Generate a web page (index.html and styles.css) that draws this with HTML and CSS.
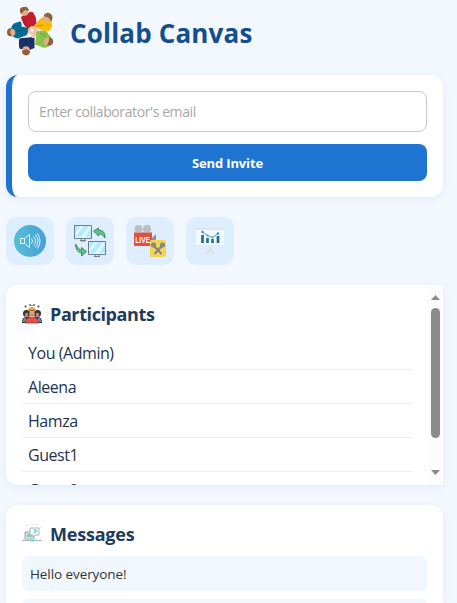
FILE: index.html
```html
<!DOCTYPE html>
<html lang="en">
<head>
<meta charset="utf-8">
<title>Collab Canvas</title>
<link rel="stylesheet" href="styles.css">
</head>
<body>
<header class="brand">
  <svg class="logo" viewBox="0 0 48 50" width="48" height="50">
    <path fill="#c41e32" d="M14 12q0-2 4-3l5-3q3-1 4 2l2 4 .5 7-8.500 4-4-4z"/>
    <path fill="#fdbb08" d="m26 21 7-8q3-3 6-1l5 3q2 2 0 8-2 3-6 2l-6-2z"/>
    <path fill="#8ac44a" d="m28 25 8-.5q4 0 5 3l5 6q1 4-3 6-4 3-7 2l-8-3 1-7z"/>
    <path fill="#1d2f65" d="M12 34q0-2 3-2l12.500-1v11l-5 2-9-1q-2 0-1.500-9z"/>
    <path fill="#066b92" d="M4 23q1-5 4-6l5-1.500q2 0 1.500 5l7.500 1.500-2 7-9 3.500q-5-1-7-4z"/>
    <path fill="#f0c6aa" d="m21 23 3-3 5 1 2 3-3 4v4h-3l-1-4-3-1z"/><circle cx="25" cy="24.500" r="1.300" fill="#fff"/>
    <path d="m16 13 4 7m-11 6 6-2m3 9 1 5m14-11 6 3m-9-10 6-1" fill="none" stroke="#17202d" stroke-opacity=".3"/>
    <g fill="#deb08b"><circle cx="17.500" cy="6" r="3.800"/><circle cx="39.500" cy="12.500" r="3.800"/><circle cx="40.500" cy="35.500" r="3.800"/><circle cx="19" cy="44" r="3.800"/><circle cx="4.500" cy="26.500" r="3.800"/></g>
    <g fill="#925f38"><path d="M13 6q-1-5 4-5 4-1 5 4l-4-1-4 4z"/><path d="M37 9q3-4 7-1 3 3 0 8l-2-4-5-2z"/><path d="M42 31q5 2 4 6-2 4-6 2l2-4z"/><path d="M15 45l4-2 4 2q0 4-4 4.500-4-.5-4-4.500z"/><path d="M5 22q-5 0-5 4 0 5 5 4l-2-4z"/></g>
  </svg>
  <h1>Collab Canvas</h1>
</header>
<main>
  <form class="card invite">
    <input type="email" placeholder="Enter collaborator's email">
    <button type="button">Send Invite</button>
  </form>
  <nav class="tools">
    <a class="tool"><svg viewBox="0 0 32 32" width="32" height="32">
      <defs><linearGradient id="sound"><stop stop-color="#58bed4"/><stop offset="1" stop-color="#45a0db"/></linearGradient></defs>
      <circle cx="16" cy="16" r="16" fill="url(#sound)"/>
      <path fill="none" stroke="#e5f7fc" d="M6.500 13.500h4v5h-4zM10.500 13.500l5-4v13l-5-4M17.500 13.500q2 2.500 0 5M19.500 11.500q4 4.500 0 9M21.500 9.500q5 6.500 0 13M23.500 8.500q5 7.500 0 15"/>
    </svg></a>
    <a class="tool"><svg viewBox="0 0 32 32" width="32" height="32">
      <g id="monitor"><path d="M.5.5h17v13H.5z" fill="#b5eafc" stroke="#6d7c87"/><path d="m7 12 8-11h2v2l-6 9zM1 8l6-7h3l-8 10z" fill="#e2f8ff"/><path d="M1 12h16v2H1z" fill="#f5f8fa"/><path d="M.5 13.500h17M7 14v2h4v-2M6 15.500h6" fill="none" stroke="#707c86"/></g>
      <use href="#monitor" x="14" y="16"/>
      <g fill="#58c782" stroke="#397553" stroke-width=".8"><path d="m19.500 6 5-3v2q7 0 6.500 8-3-5-6.500-4v2z"/><path d="M1.500 19q0 8 6 9v3l5-4.500-5-4v3q-3-1-6-6.500z"/></g>
    </svg></a>
    <a class="tool"><svg viewBox="0 0 32 32" width="32" height="32">
      <g fill="#bdbdbd"><circle cx="4.500" cy="4" r="4"/><circle cx="13" cy="4" r="4"/></g><path d="M0 7h18v2H0z" fill="#c5a5a3"/><path fill="#87949b" d="m17 14 5-5v10h-5z"/>
      <rect y="8" width="18" height="13" rx="1" fill="#e94b3c"/>
      <text x="1.200" y="18" class="live" textLength="15" lengthAdjust="spacingAndGlyphs">LIVE</text>
      <rect x="16" y="15" width="16" height="17" rx="1" fill="#f5d45e"/>
      <g fill="none" stroke="#7a8584" stroke-width="2"><circle cx="19.500" cy="20" r="1.500"/><circle cx="28.500" cy="20" r="1.500"/><path d="m20.500 21.500 7 7.500M27.500 21.500l-7 7.500"/></g>
    </svg></a>
    <a class="tool"><svg viewBox="0 0 32 32" width="32" height="32">
      <path d="M2 4h28v17H2z" fill="#f0f9fb"/><path d="M2 3h28v2H2z" fill="#e2e6ea"/><path d="M2 20h28v1H2z" fill="#e4ebf0"/>
      <path d="M16 21v5m0-1-4 4m4-4 4 4" fill="none" stroke="#d4dbe1" stroke-width="1.500"/>
      <path d="M8.500 10v8M13.500 13v5M18.500 14v4M24 11v7" stroke="#286f8d" stroke-width="2.700"/>
      <path d="m8.500 7 5 3.500 5 2 5.500-4" fill="none" stroke="#397f9c" stroke-width=".8"/><g fill="#28aabc"><circle cx="8.500" cy="7" r="1.300"/><circle cx="13.500" cy="10.500" r="1"/><circle cx="18.500" cy="12.500" r="1"/><circle cx="24" cy="8.500" r="1.300"/></g>
    </svg></a>
  </nav>
  <section class="card participants">
    <div class="roster">
      <h2><svg viewBox="0 0 20 20" width="20" height="20">
        <g fill="#8c8f92"><path d="M2 2h3v1H2zM3 1h1v3H3zM15 2h3v1h-3zM16 1h1v3h-1zM7 0h2v2H7zM11 0h2v2h-2zM9 1h2v1H9z"/></g>
        <path d="M0 19q0-6 4-6h12q4 0 4 6z" fill="#29303a"/><path d="M1 18q0-4 3-4l2 4z" fill="#63ae77"/><path d="m14 18 2-4q3 0 3 4z" fill="#58a4e5"/>
        <circle cx="4.500" cy="9.500" r="3.500" fill="#303139"/><circle cx="15.500" cy="9.500" r="3.500" fill="#303139"/><path d="M3 9h3v4H3zM14 9h3v4h-3z" fill="#b98472"/>
        <path d="M3 19q0-5 5-6h4q5 1 5 6z" fill="#ec4b4b" stroke="#593138" stroke-width=".7"/><circle cx="10" cy="8.500" r="4" fill="#593c32"/><path d="M7.500 7h5v4L10 14l-2.500-3z" fill="#efb18a"/><path d="M6 7q0-4 4-4t4 4l-4-1z" fill="#ecaa37"/><path d="M8 9h1m2 0h1M9 11h2" stroke="#6d3838" stroke-width=".8"/>
      </svg><span>Participants</span></h2>
      <ul><li>You (Admin)</li><li>Aleena</li><li>Hamza</li><li>Guest1</li><li>Guest2</li></ul>
    </div>
    <div class="scrollbar"><i class="arrow up"></i><i class="thumb"></i><i class="arrow down"></i></div>
  </section>
  <section class="card messages">
    <h2><svg viewBox="0 0 20 20" width="20" height="20">
      <path d="M4 1.500h2m3-1h2m3 0h2m2 3h1" stroke="#d8dddf"/><path d="M3 8h9v7H3z" fill="#d8dfe1" stroke="#9ba8ad"/><path d="M5 10h5v3H5z" fill="#8bc8c1"/><path d="M8 4h9v7h-3l-3 2v-2H8z" fill="#f7fafa" stroke="#aeb8bc"/><path d="M12 6h2v2h-1.500v1" fill="none" stroke="#35cbb3"/><path d="M0 16.500h20" stroke="#a7b5b9"/><path d="M1 15h14" stroke="#d1d9dc"/><path d="M8 16h5l-3 2z" fill="#53d2bd"/>
    </svg><span>Messages</span></h2>
    <div class="message">Hello everyone!</div>
    <div class="message"></div>
  </section>
</main>
</body>
</html>
```
FILE: styles.css
```css
* { box-sizing: border-box; }
html { overflow: hidden; }
body { margin: 0; height: 603px; overflow: hidden; background: #f3f8ff; color: #1d344f; font-family: "Open Sans", "Noto Sans", sans-serif; }
.brand { height: 75px; padding: 6px 7px; display: flex; align-items: flex-start; gap: 15px; }
.logo { flex: none; }
h1 { margin: 7px 0 0; font-size: 26px; line-height: 40px; font-weight: 700; color: #144e8c; letter-spacing: .18px; white-space: nowrap; }
main { width: 437px; height: 528px; margin-left: 6px; display: flex; flex-direction: column; gap: 20px; }
.card { flex: none; background: #fff; border-radius: 12px; box-shadow: 0 2px 8px rgba(20, 60, 110, .07); }
.invite { height: 122px; border-left: 6px solid #1f74d2; padding: 16px; display: flex; flex-direction: column; gap: 12px; }
input { width: 100%; height: 41px; border: 1px solid #c8c8c8; border-radius: 8px; padding: 0 10px; font: 14px "Open Sans", sans-serif; letter-spacing: -.4px; background: #fff; }
input::placeholder { color: #a7a7a7; opacity: 1; }
button { height: 37px; border: 0; border-radius: 8px; background: #1f74d2; color: #fff; font: 700 13px "Open Sans", sans-serif; letter-spacing: -.15px; }
.tools { flex: none; height: 48px; display: flex; gap: 12px; }
.tool { width: 48px; height: 48px; padding: 8px; border-radius: 10px; background: #dfeeff; }
.tool svg { display: block; }
.live { fill: #fff; font: 700 8.5px "Liberation Sans", sans-serif; }
.participants { height: 200px; display: flex; overflow: hidden; border-radius: 12px 0 0 12px; }
.roster { flex: 1; padding: 16px; }
h2 { height: 26px; margin: 0; display: flex; align-items: center; gap: 8px; font-size: 18px; line-height: 26px; font-weight: 700; letter-spacing: -.4px; color: #1d3c5c; }
h2 svg { flex: none; }
ul { list-style: none; margin: 9px 0 0; padding: 0; }
li { height: 34px; padding: 0 6px; border-bottom: 1px solid #eee; font-size: 16px; line-height: 35px; letter-spacing: -.45px; }
li:last-child { line-height: 37px; }
.scrollbar { width: 15px; background: #fcfcfc; display: flex; flex-direction: column; align-items: center; padding: 10px 0; }
.thumb { width: 9px; height: 130px; margin-top: 8px; border-radius: 5px; background: #8b8b8b; }
.arrow { width: 9px; height: 5px; background: #8b8b8b; }
.up { clip-path: polygon(50% 0, 100% 100%, 0 100%); }
.down { clip-path: polygon(0 0, 100% 0, 50% 100%); margin-top: auto; }
.messages { height: 98px; padding: 16px; overflow: hidden; border-radius: 12px 12px 0 0; }
.messages h2 { margin-bottom: 9px; letter-spacing: -.2px; }
.message { height: 35px; margin-bottom: 8px; border-radius: 6px; padding: 0 8px; background: #f0f7ff; color: #333; font-size: 13.5px; line-height: 36px; letter-spacing: -.08px; }
```
